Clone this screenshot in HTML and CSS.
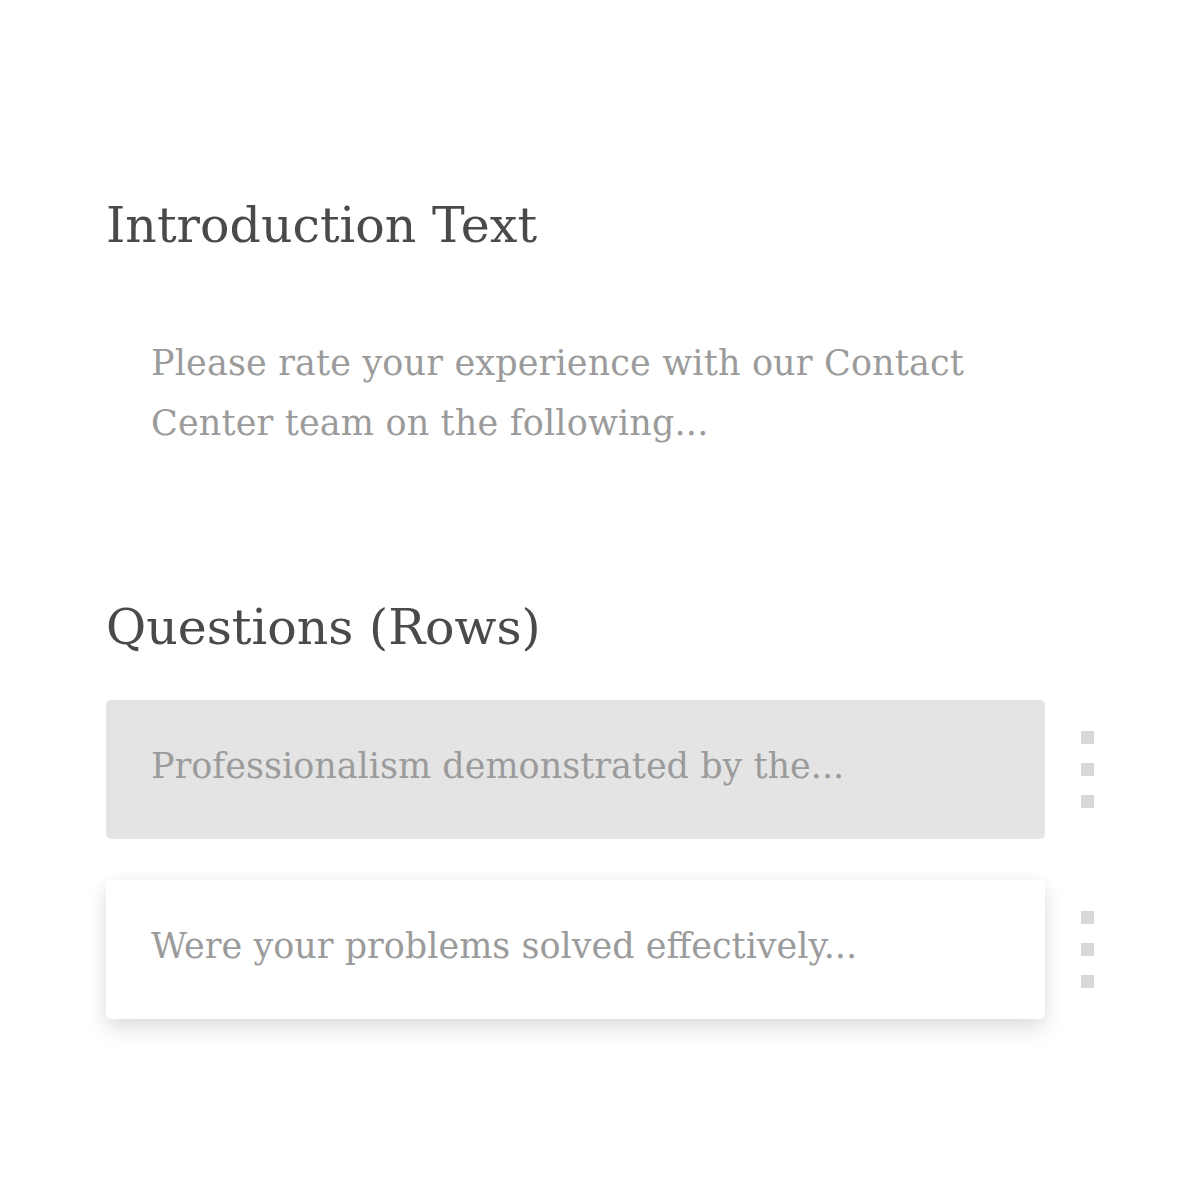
FILE: index.html
```html
<!DOCTYPE html>
<html lang="en">
<head>
  <meta charset="UTF-8">
  <title>Survey questions</title>
  <link rel="stylesheet" href="styles.css">
</head>
<body>

<div class="page">
  <h2 class="title title-intro">Introduction Text</h2>
  <p class="intro">Please rate your experience with our Contact Center team on the following...</p>

  <h2 class="title title-rows">Questions (Rows)</h2>
  <ul class="rows">
    <li class="row">
      <div class="card card-active">Professionalism demonstrated by the...</div>
      <div class="handle"><span></span><span></span><span></span></div>
    </li>
    <li class="row">
      <div class="card card-raised">Were your problems solved effectively...</div>
      <div class="handle"><span></span><span></span><span></span></div>
    </li>
  </ul>
</div>

</body>
</html>
```

FILE: styles.css
```css
body {
  margin: 0;
  background-color: #fff;
  font-family: "DejaVu Serif", "Liberation Serif", serif;
}
.page {
  padding: 191px 0 0 106px;
  width: 1000px;
}
.title {
  margin: 0;
  font-size: 49px;
  font-weight: normal;
  line-height: 70px;
  color: #4a4a4a;
}
.intro {
  margin: 72px 0 0 45px;
  width: 850px;
  font-size: 35px;
  letter-spacing: 0.15px;
  line-height: 60px;
  color: #9b9b9b;
}
.title-rows {
  margin-top: 140px;
}
.rows {
  list-style-type: none;
  margin: 37px 0 0;
  padding: 0;
}
.row {
  display: flex;
  align-items: center;
  gap: 36px;
  margin-bottom: 41px;
}
.card {
  box-sizing: border-box;
  width: 939px;
  height: 139px;
  padding: 0 45px 8px;
  display: flex;
  align-items: center;
  font-size: 35px;
  color: #9b9b9b;
  border-radius: 5px;
}
.card-active {
  background-color: #e4e4e4;
}
.card-raised {
  background-color: #fff;
  box-shadow: 0 10px 22px rgba(0, 0, 0, 0.12), 0 0 14px rgba(0, 0, 0, 0.04);
}
.handle {
  display: flex;
  flex-direction: column;
  gap: 19px;
}
.handle span {
  width: 13px;
  height: 13px;
  background-color: #d8d8d8;
}
```
